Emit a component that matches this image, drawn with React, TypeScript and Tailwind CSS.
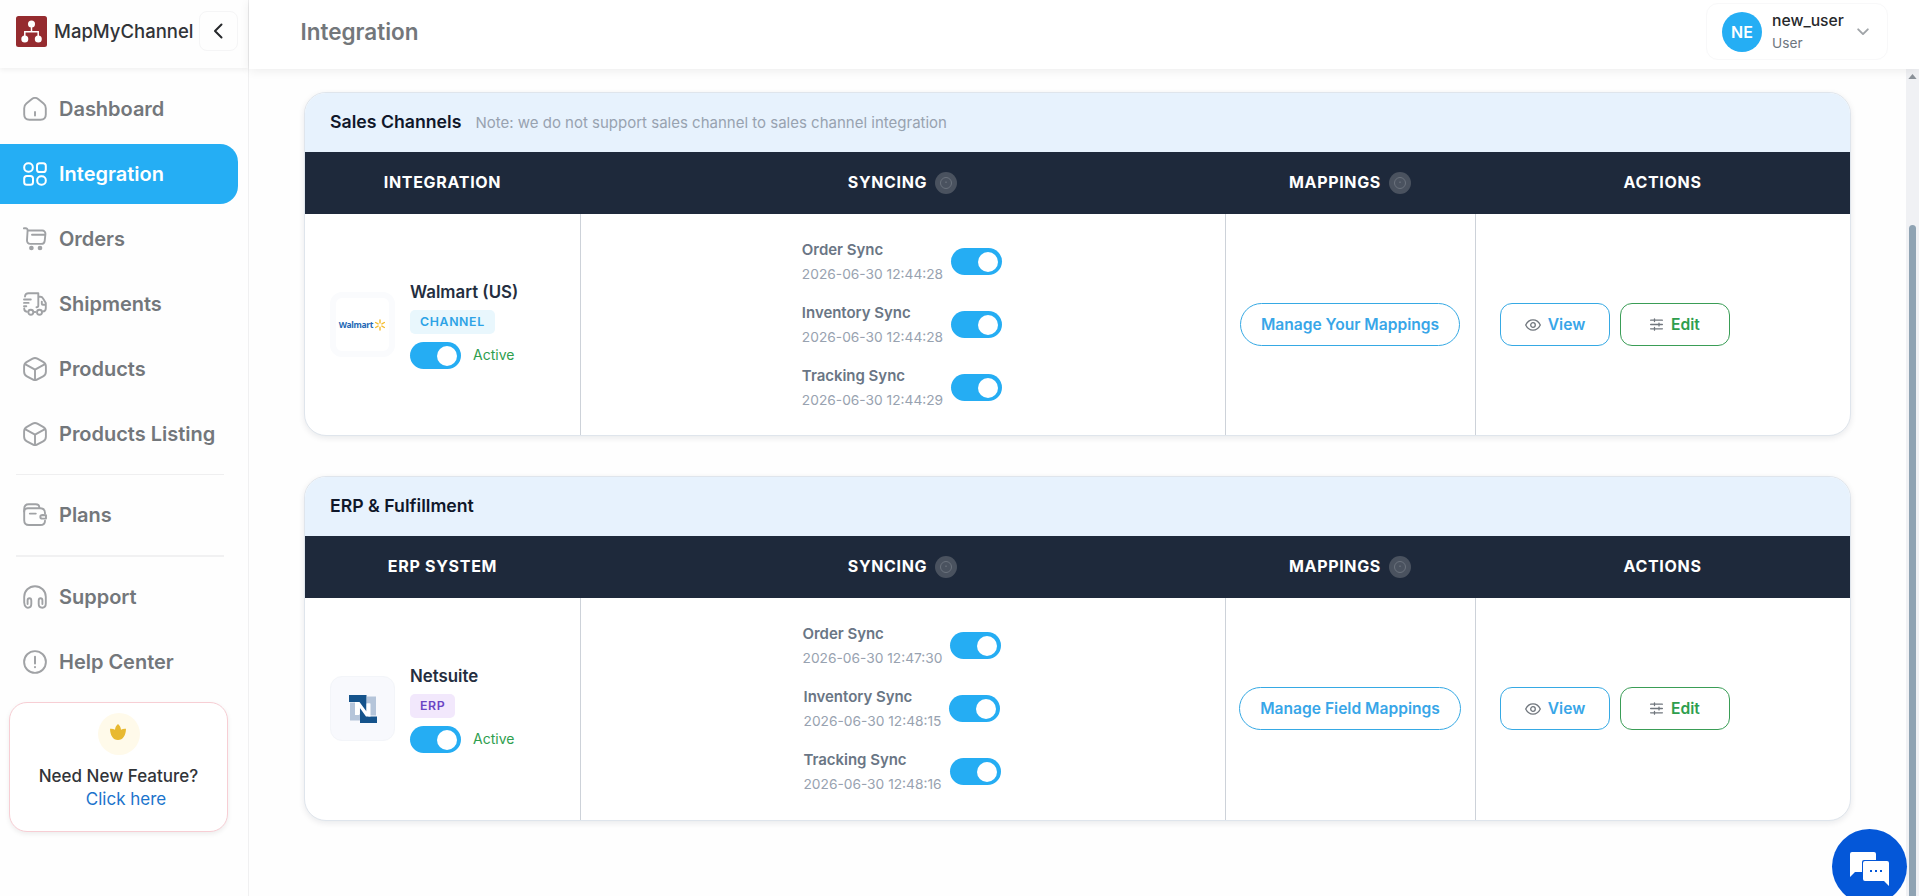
import React from 'react';

const stroke = { fill: 'none', stroke: 'currentColor', strokeWidth: 1.9, strokeLinecap: 'round', strokeLinejoin: 'round' } as const;

function NavIcon({ name }: { name: string }) {
  return (
    <svg viewBox="0 0 24 24" className="ml-[0.5px] h-6 w-6 shrink-0" {...stroke}>
      {name === 'home' && (
        <>
          <path d="M1.200 11.200c0-2 .6-3.300 2.200-4.600l5.200-4.300c2-1.700 4.800-1.700 6.800 0l5.200 4.300c1.600 1.300 2.200 2.600 2.200 4.600v6.300c0 3.500-1.800 5.200-5.300 5.200H6.500c-3.500 0-5.300-1.700-5.300-5.200z" />
          <path d="M12 15v3.500" />
        </>
      )}
      {name === 'grid' && (
        <g strokeWidth={2}>
          <rect x="1.200" y="1.200" width="8.600" height="8.600" rx="4" />
          <rect x="14" y="1.200" width="8.800" height="8.800" rx="2.600" />
          <rect x="1.200" y="14" width="8.800" height="8.800" rx="2.600" />
          <rect x="14.200" y="14.200" width="8.600" height="8.600" rx="4" />
        </g>
      )}
      {name === 'cart' && (
        <>
          <path d="M.9 1.300h1.700c1.300 0 2.100 1 2 2.200L4 13.300c-.1 2 1.200 3.600 3.200 3.600h11c1.900 0 3.300-1.300 3.500-3.100l.7-6.700c.2-2-1.100-3.600-3.200-3.600H4.700M9 7.800h13" />
          <circle cx="8.400" cy="21" r="1.400" fill="currentColor" />
          <circle cx="17" cy="21" r="1.400" fill="currentColor" />
        </>
      )}
      {name === 'truck' && (
        <>
          <path d="M2 4.500C2 2.400 3.500 1.200 5.500 1.200h9.800v12.300c0 1-.8 1.800-1.800 1.800M15.300 4.800h2.200c1 0 1.900.5 2.400 1.400l2.900 4.700v5.400c0 2-1 3.200-3 3.200M12.300 20h-.6M1.200 16.500c0 1.800 1 3 2.700 3.200M22.500 12.800h-2.700c-.6 0-1-.4-1-1V9.600M1 7.500h6.800M1 10.900h4.600M1 14.200h2.300" />
          <circle cx="7.800" cy="20.200" r="2.500" />
          <circle cx="16.500" cy="20.200" r="2.500" />
        </>
      )}
      {name === 'box' && (
        <>
          <path d="M9.600 1.700 3.900 4.900C2.300 5.800 1.100 7.700 1.100 9.500v5.200c0 1.800 1.200 3.700 2.800 4.600l5.700 3.100c1.300.8 3.500.8 4.800 0l5.700-3.100c1.600-.9 2.800-2.800 2.800-4.600V9.500c0-1.800-1.200-3.700-2.800-4.600l-5.700-3.200c-1.300-.7-3.500-.7-4.800 0z" />
          <path d="m2.500 7.300 9.500 5.400 9.500-5.400M12 22.500v-9.800" />
        </>
      )}
      {name === 'wallet' && (
        <>
          <path d="M22 10.500V10c0-3-1.800-4.700-4.800-4.700H4.800C2.700 5.300 1.200 6.500 1.200 8.400v8.800c0 3 1.800 4.800 4.800 4.800h11.200c3 0 4.800-1.800 4.800-4.300" />
          <path d="M1.200 8.500V6c0-3 1.500-4.700 4.500-4.700h7c2 0 3.600.8 3.600 3.300M6.800 10.600h6" />
          <path d="M23 12.200v3.400h-3.400c-1.300 0-2.300-.7-2.300-1.700s1-1.900 2.300-1.900z" />
        </>
      )}
      {name === 'headphones' && (
        <path d="M3.300 22.200C2 21.300 1.200 19.800 1.200 17.600v-5.800C1.200 5.900 6 1.200 12 1.200s10.800 4.700 10.800 10.600v6.800c0 2.300-1.200 4.100-3.500 4.100s-3.600-1.500-3.600-3.600v-3.400c0-1.600.7-2.400 1.800-2.400s1.900.8 1.900 2v3.700M3.300 22.200c.5.300 1 .500 1.700.5 2 0 3.300-1.500 3.300-3.600v-3.400c0-1.600-.7-2.400-1.800-2.400s-1.900.8-1.900 2v3.700" />
      )}
      {name === 'help' && (
        <>
          <circle cx="12" cy="12" r="10.900" />
          <path d="M12 6.800v6.600M12 17.100v.1" strokeWidth={2} />
        </>
      )}
    </svg>
  );
}

function NavItem({ icon, label, active }: { icon: string; label: string; active?: boolean }) {
  return (
    <div
      className={
        active
          ? 'mr-[10px] flex h-[60px] items-center gap-[12.5px] rounded-r-[18px] bg-[#25aef4] pl-[22px] text-xl font-semibold text-white'
          : 'mr-[10px] flex h-[60px] items-center gap-[12.5px] pl-[22px] text-xl font-semibold tracking-[-0.02px] text-[#73777b]'
      }
    >
      <span className={active ? 'text-white' : 'text-[#a0a2a5]'}>
        <NavIcon name={icon} />
      </span>
      <span>{label}</span>
    </div>
  );
}

function Toggle() {
  return (
    <div className="flex h-[27px] w-[51px] shrink-0 items-center justify-end rounded-full bg-[#25adf3] pr-[4px]">
      <div className="h-5 w-5 rounded-full bg-white" />
    </div>
  );
}

function InfoDot() {
  return (
    <svg viewBox="0 0 22 22" className="h-[22px] w-[22px]" fill="none">
      <circle cx="11" cy="11" r="11" fill="#4a525f" />
      <circle cx="11" cy="11" r="5.500" stroke="#6b727d" />
      <path d="M11 9.500v1.500" stroke="#767d87" />
    </svg>
  );
}

function SyncRow({ label, time }: { label: string; time: string }) {
  return (
    <div className="flex items-center gap-2">
      <div>
        <div className="text-[15px] leading-6 font-semibold tracking-[-0.03px] text-[#6a7685]">{label}</div>
        <div className="text-[13.750px] leading-6 text-[#98a2b0]">{time}</div>
      </div>
      <Toggle />
    </div>
  );
}

function WalmartLogo() {
  return (
    <div className="flex items-center gap-[1px] pt-px">
      <span className="font-['Noto_Sans'] text-[8.500px] leading-none font-bold tracking-[-0.3px] text-[#2468b5]">Walmart</span>
      <svg viewBox="0 0 12 12" className="h-3 w-3" stroke="#f5bd2f" strokeWidth="1.400" strokeLinecap="round">
        <path d="M6 .9v3M6 8.100v3M1.600 3.500l2.500 1.400M7.900 7.100l2.500 1.400M1.600 8.500l2.500-1.400M7.900 4.900l2.500-1.400" />
      </svg>
    </div>
  );
}

function NetsuiteLogo() {
  return (
    <svg viewBox="0 0 28 28" className="h-7 w-7">
      <path d="M1 7.500h6v12h4v6H1zM18 1.500h9v19h-6v-12h-3z" fill="#b5c5da" />
      <path d="M0 0h17.500v18.500L9.500 7H0zM28 28H11V10l8.500 11.500H28z" fill="#15538b" />
      <path d="M6 7h4.500l7 9.500V8.500h4v13H17L10 11.800v8.200H6z" fill="#fff" />
    </svg>
  );
}

interface CardProps {
  title: string;
  note?: string;
  firstColumn: string;
  name: string;
  badge: string;
  badgeClass: string;
  logo: React.ReactNode;
  logoClass: string;
  bodyClass: string;
  times: string[];
  mapping: string;
}

function HeadCell({ label, info }: { label: string; info?: boolean }) {
  return (
    <div className={info ? 'flex items-center justify-center gap-2 pr-[2px] text-[16px] font-bold tracking-[0.65px] text-white' : 'flex items-center justify-center pr-px text-[16px] font-bold tracking-[0.7px] text-white'}>
      <span className="pb-[2px]">{label}</span>
      {info && <InfoDot />}
    </div>
  );
}

function IntegrationCard(p: CardProps) {
  return (
    <section className="w-[1547px] overflow-hidden rounded-[22px] border border-[#dfe5ec] bg-white shadow-[0_2px_6px_rgba(15,23,42,0.09)]">
      <div className="flex h-[59px] items-center gap-[14px] bg-[#e7f2fd] pb-px pl-[25px]">
        <h2 className="text-[17.700px] font-semibold text-[#0f172a]">{p.title}</h2>
        {p.note && <span className="pt-[2px] text-[15px] text-[#98a2b0]">{p.note}</span>}
      </div>
      <div className="grid h-[62px] grid-cols-[276px_645px_250px_374px] bg-[#1e293b]">
        <HeadCell label={p.firstColumn} />
        <HeadCell label="SYNCING" info />
        <HeadCell label="MAPPINGS" info />
        <HeadCell label="ACTIONS" />
      </div>
      <div className={p.bodyClass}>
        <div className="flex items-center gap-[15px] border-r border-[#cdd2d9] pb-[var(--slack)] pl-[25px]">
          <div className={p.logoClass}>{p.logo}</div>
          <div className="flex flex-col items-start">
            <div className="text-[16.850px] leading-6 font-semibold text-[#242e40]">{p.name}</div>
            <div className={p.badgeClass}>{p.badge}</div>
            <div className="mt-2 flex items-center gap-3">
              <Toggle />
              <span className="pb-[2px] text-[14px] text-[#2e9e4d]">Active</span>
            </div>
          </div>
        </div>
        <div className="flex flex-col items-center justify-center gap-[15px] border-r border-[#cdd2d9] pr-[2px] pb-[var(--slack)]">
          <SyncRow label="Order Sync" time={p.times[0]} />
          <SyncRow label="Inventory Sync" time={p.times[1]} />
          <SyncRow label="Tracking Sync" time={p.times[2]} />
        </div>
        <div className="flex items-center justify-center border-r border-[#cdd2d9] pr-px pb-[var(--slack)]">
          <button className="h-[43px] rounded-full border border-[#36a9e4] px-5 text-[15.600px] font-semibold whitespace-nowrap text-[#38a6e8]">
            {p.mapping}
          </button>
        </div>
        <div className="flex items-center gap-[10px] pb-[var(--slack)] pl-6">
          <button className="flex h-[43px] w-[110px] items-center justify-center gap-[7px] rounded-xl border border-[#36a9e4] text-[15.600px] font-semibold text-[#38a6e8]">
            <svg viewBox="0 0 16 12" className="h-3 w-4 text-[#70767d]" {...stroke} strokeWidth={1.3}>
              <path d="M.7 6C2.300 2.700 4.800.9 8 .9S13.700 2.700 15.300 6c-1.600 3.300-4.100 5.100-7.300 5.100S2.300 9.300.7 6z" />
              <circle cx="8" cy="6" r="2.300" />
            </svg>
            View
          </button>
          <button className="flex h-[43px] w-[110px] items-center justify-center gap-2 rounded-xl border border-[#3a9d56] text-[15.600px] font-semibold text-[#2e9e4d]">
            <svg viewBox="0 0 13 13" className="h-[13px] w-[13px] text-[#70767d]" {...stroke} strokeWidth={1.3}>
              <path d="M.6 2.200h11.800M.6 6.500h11.800M.6 10.800h11.800M4.500 .8v2.800M9 5.100v2.800M4.500 9.400v2.800" />
            </svg>
            Edit
          </button>
        </div>
      </div>
    </section>
  );
}

export default function App() {
  return (
    <div className="relative flex h-[896px] w-full overflow-hidden bg-[#fefefe] font-['Inter',sans-serif]">
      <aside className="flex w-[249px] shrink-0 flex-col border-r border-[#f0f0f1]">
        <div className="flex h-[68px] shrink-0 items-start pl-4 shadow-[0_2px_5px_rgba(0,0,0,0.06)]">
          <svg viewBox="0 0 31 31" className="mt-[16px] h-[31px] w-[31px] shrink-0">
            <rect width="31" height="31" rx="2.500" fill="#952b2f" />
            <path d="M15.500 8v8M8.800 23v-7.200h13.400V23" fill="none" stroke="#fff" strokeWidth="1.500" />
            <circle cx="15.500" cy="8" r="3.500" fill="#fff" />
            <circle cx="8.800" cy="23" r="3.500" fill="#fff" />
            <circle cx="22.300" cy="23" r="3.500" fill="#fff" />
          </svg>
          <span className="mt-[16px] ml-[7px] w-[145px] shrink-0 text-[18.500px] leading-[30px] font-medium text-[#313438]">MapMyChannel</span>
          <div className="mt-[11px] flex h-[40px] w-[39px] shrink-0 items-center justify-center rounded-lg border border-[#f5f5f6] pr-px">
            <svg viewBox="0 0 10 16" className="h-4 w-[10px] text-[#26282b]" {...stroke} strokeWidth={2}>
              <path d="M8.500 1.500 2 8l6.500 6.500" />
            </svg>
          </div>
        </div>
        <nav className="flex flex-col gap-[5px] pt-[11px]">
          <NavItem icon="home" label="Dashboard" />
          <NavItem icon="grid" label="Integration" active />
          <NavItem icon="cart" label="Orders" />
          <NavItem icon="truck" label="Shipments" />
          <NavItem icon="box" label="Products" />
          <NavItem icon="box" label="Products Listing" />
          <div className="mx-4 mt-[5px] mr-6 mb-[5px] h-px bg-[#efeff0]" />
          <NavItem icon="wallet" label="Plans" />
          <div className="mx-4 mt-[5px] mr-6 h-[2px] bg-[#f1f1f2]" />
          <div className="pt-[5px]">
            <NavItem icon="headphones" label="Support" />
          </div>
          <NavItem icon="help" label="Help Center" />
        </nav>
        <div className="mt-[10px] ml-[9px] flex h-[130px] w-[219px] flex-col items-center rounded-[18px] border border-[#f7ced4] bg-white pt-[10px] shadow-[0_2px_5px_rgba(0,0,0,0.07)]">
          <div className="flex h-[42px] w-[42px] items-center justify-center rounded-full bg-[#fffaea]">
            <svg viewBox="0 0 16 16" className="mr-px mb-1 h-4 w-4">
              <path d="M8 0c1.800 1.500 2.800 3.300 3 5.800 1.400-.9 3-1.200 5-1C15.800 11.500 13 16 8 16S.2 11.500 0 4.800c2-.2 3.600.1 5 1C5.200 3.300 6.200 1.500 8 0z" fill="#e8b931" />
            </svg>
          </div>
          <div className="mt-[10px] text-[17px] leading-[23px] font-medium text-[#313438]">Need New Feature?</div>
          <div className="pl-[15px] text-[17px] leading-[23px] text-[#1c74cc]">Click here</div>
        </div>
      </aside>

      <div className="flex min-w-0 flex-1 flex-col">
        <header className="z-10 flex h-[69px] shrink-0 justify-between bg-white pr-[31px] pl-[51.500px] shadow-[0_2px_10px_rgba(0,0,0,0.07)]">
          <h1 className="pt-[16px] text-[22.500px] leading-8 font-semibold text-[#73777b]">Integration</h1>
          <div className="mt-[3px] flex h-[57px] w-[182px] items-center rounded-xl border border-[#f8f8f9] pl-[15px]">
            <div className="flex h-10 w-10 items-center justify-center rounded-full bg-[#25aef4] text-base font-semibold text-white">NE</div>
            <div className="ml-[10px] w-[85px]">
              <div className="pt-px text-[15.700px] leading-[22px] font-medium text-[#26282b]">new_user</div>
              <div className="text-[13.700px] leading-[22px] text-[#6d7680]">User</div>
            </div>
            <svg viewBox="0 0 12 8" className="h-2 w-3 text-[#a0a4a8]" {...stroke}>
              <path d="m1.200 1.300 4.800 4.800 4.800-4.800" />
            </svg>
          </div>
        </header>
        <div className="flex min-h-0 flex-1">
          <main className="flex flex-1 flex-col gap-10 pt-[23px] pl-[55px]">
            <IntegrationCard
              title="Sales Channels"
              note="Note: we do not support sales channel to sales channel integration"
              firstColumn="INTEGRATION"
              name="Walmart (US)"
              badge="CHANNEL"
              badgeClass="mt-[6px] flex h-6 items-center rounded-[5px] bg-[#e9f7fd] px-[10px] text-[12.300px] font-semibold tracking-[0.65px] text-[#2ea3e6]"
              logo={<WalmartLogo />}
              logoClass="flex h-[65px] w-[65px] items-center justify-center rounded-xl border-[6px] border-[#fafbfd] bg-white"
              bodyClass="grid h-[221px] grid-cols-[276px_645px_250px_374px] [--slack:0px]"
              times={['2026-06-30 12:44:28', '2026-06-30 12:44:28', '2026-06-30 12:44:29']}
              mapping="Manage Your Mappings"
            />
            <IntegrationCard
              title="ERP & Fulfillment"
              firstColumn="ERP SYSTEM"
              name="Netsuite"
              badge="ERP"
              badgeClass="mt-[6px] flex h-6 items-center rounded-[5px] bg-[#f2e8fc] px-[10px] text-[12.300px] font-semibold tracking-[0.65px] text-[#6b45c4]"
              logo={<NetsuiteLogo />}
              logoClass="flex h-[65px] w-[65px] items-center justify-center rounded-xl border border-[#f3f5f9] bg-[#f8f9fd]"
              bodyClass="grid h-[222px] grid-cols-[276px_645px_250px_374px] [--slack:1px]"
              times={['2026-06-30 12:47:30', '2026-06-30 12:48:15', '2026-06-30 12:48:16']}
              mapping="Manage Field Mappings"
            />
          </main>
          <div className="flex w-[13px] flex-col items-center bg-[#f0f1f4]">
            <svg viewBox="0 0 10 6" className="mt-[5px] h-[5px] w-[9px]">
              <path d="M5 0 10 6H0z" fill="#8b9299" />
            </svg>
            <div className="mt-[146px] w-[7px] flex-1 rounded-t-full bg-[#8fa3b3]" />
          </div>
        </div>
      </div>

      <div className="absolute top-[829px] left-[1832px] z-20 h-[75px] w-[75px] rounded-full bg-[#0457d8]">
        <svg viewBox="0 0 75 75" className="h-full w-full">
          <path d="M20 23h22a2 2 0 0 1 2 2v6H32a2 2 0 0 0-2 2v10H23l-5 5V25a2 2 0 0 1 2-2z" fill="#fff" />
          <path d="M33 32h22a2 2 0 0 1 2 2v23l-5-5H33a2 2 0 0 1-2-2V34a2 2 0 0 1 2-2z" fill="#fff" />
          <path d="M38 41h2v2h-2zM43 41h2v2h-2zM48 41h2v2h-2z" fill="#0457d8" />
        </svg>
      </div>
    </div>
  );
}
